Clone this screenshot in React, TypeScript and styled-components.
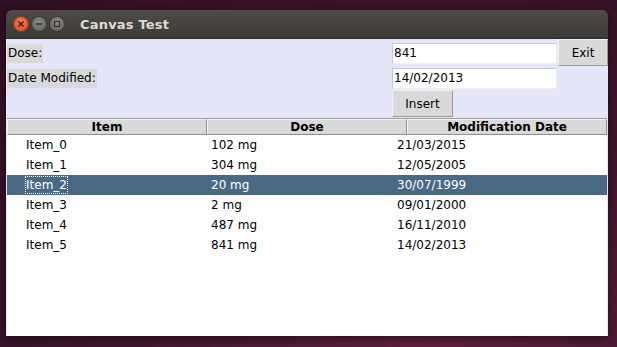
import React from "react";
import styled, { createGlobalStyle } from "styled-components";

const GlobalStyle = createGlobalStyle`
  html, body {
    margin: 0;
    padding: 0;
    width: 617px;
    height: 347px;
    overflow: hidden;
  }
  body {
    background: radial-gradient(ellipse at 70% 100%, #5e1f3c 0%, #44172f 45%, #2e0f22 100%);
    font-family: "DejaVu Sans", "Liberation Sans", sans-serif;
  }
`;

// Desktop + window
const Desktop = styled.div`
  padding: 10px 9px 0 6px;
`;

const Window = styled.div`
  width: 602px;
  height: 326px;
  display: flex;
  flex-direction: column;
  box-shadow: 0 2px 8px rgba(0, 0, 0, 0.55);
  border-radius: 6px 6px 0 0;
  overflow: hidden;
`;

const TitleBar = styled.div`
  height: 28px;
  flex: none;
  display: flex;
  align-items: center;
  padding-left: 8px;
  background: linear-gradient(#4d4c48, #3c3b37);
  border-bottom: 1px solid #2b2a27;
`;

const WinButtons = styled.div`
  display: flex;
  gap: 4px;
`;

const WinButton = styled.div<{ $close?: boolean }>`
  width: 14px;
  height: 14px;
  border-radius: 50%;
  display: flex;
  align-items: center;
  justify-content: center;
  background: ${(p) =>
    p.$close
      ? "radial-gradient(circle at 50% 35%, #f37c4f, #df4a16)"
      : "radial-gradient(circle at 50% 35%, #8a8984, #5f5e5a)"};
  box-shadow: 0 0 0 1px ${(p) => (p.$close ? "#9c3510" : "#3a3935")};
`;

const Title = styled.div`
  margin-left: 16px;
  color: #dfdbd2;
  font-weight: bold;
  font-size: 13px;
  letter-spacing: 0.2px;
`;

const Body = styled.div`
  flex: 1;
  display: flex;
  flex-direction: column;
  background: #e6e6fa;
  padding: 1px 0 0 1px;
`;

// Top form (grid like Tk)
const Form = styled.div`
  display: grid;
  grid-template-columns: 1fr 166px 50px;
  grid-template-rows: 27px 22px 29px;
  align-items: center;
`;

const Label = styled.div`
  justify-self: start;
  background: #d9d9d9;
  font-size: 12px;
  color: #000;
  padding: 1px 1px 2px 1px;
  line-height: 16px;
`;

const Entry = styled.div`
  box-sizing: border-box;
  height: 21px;
  width: 165px;
  background: #fff;
  border: 1px solid #c9c9cf;
  border-right-color: #f0f0f0;
  border-bottom-color: #f0f0f0;
  font-size: 12px;
  line-height: 19px;
  padding-left: 1px;
  color: #000;
`;

const Button = styled.div`
  box-sizing: border-box;
  height: 27px;
  background: #d9d9d9;
  border: 1px solid;
  border-color: #f2f2f2 #9a9a9a #9a9a9a #f2f2f2;
  font-size: 12px;
  display: flex;
  align-items: center;
  justify-content: center;
  color: #000;
`;

const ExitButton = styled(Button)`
  width: 50px;
  align-self: start;
  margin-top: -1px;
`;

const InsertButton = styled(Button)`
  width: 61px;
`;

// Table
const Table = styled.div`
  flex: 1;
  display: flex;
  flex-direction: column;
  background: #fff;
  border-top: 1px solid #9a9a9a;
  margin-right: 1px;
`;

const HeaderRow = styled.div`
  display: grid;
  grid-template-columns: 200px 200px 1fr;
  height: 16px;
  flex: none;
`;

const HeaderCell = styled.div`
  background: #d9d9d9;
  border: 1px solid;
  border-color: #f4f4f4 #8e8e8e #8e8e8e #f4f4f4;
  font-weight: bold;
  font-size: 12px;
  line-height: 14px;
  text-align: center;
  color: #000;
`;

const Row = styled.div<{ $selected?: boolean }>`
  display: grid;
  grid-template-columns: 200px 200px 1fr;
  height: 20px;
  align-items: center;
  font-size: 12px;
  background: ${(p) => (p.$selected ? "#4a6984" : "transparent")};
  color: ${(p) => (p.$selected ? "#ffffff" : "#000000")};
`;

const Cell = styled.div<{ $shift: number }>`
  margin-left: ${(p) => p.$shift}px;
  white-space: nowrap;
`;

const FocusText = styled.span<{ $focus?: boolean }>`
  outline: ${(p) => (p.$focus ? "1px dotted #ffffff" : "none")};
  outline-offset: 0px;
  padding: 1px 0;
`;

const rows = [
  ["Item_0", "102 mg", "21/03/2015"],
  ["Item_1", "304 mg", "12/05/2005"],
  ["Item_2", "20 mg", "30/07/1999"],
  ["Item_3", "2 mg", "09/01/2000"],
  ["Item_4", "487 mg", "16/11/2010"],
  ["Item_5", "841 mg", "14/02/2013"],
];

const App = () => {
  const selected = 2;
  return (
    <>
      <GlobalStyle />
      <Desktop>
        <Window>
          <TitleBar>
            <WinButtons>
              <WinButton $close>
                <svg width="8" height="8" viewBox="0 0 8 8">
                  <path d="M1.5 1.5 L6.5 6.5 M6.5 1.5 L1.5 6.5" stroke="#3b1406" strokeWidth="1.2" />
                </svg>
              </WinButton>
              <WinButton>
                <svg width="8" height="8" viewBox="0 0 8 8">
                  <path d="M1 4 H7" stroke="#2f2e2b" strokeWidth="1.4" />
                </svg>
              </WinButton>
              <WinButton>
                <svg width="8" height="8" viewBox="0 0 8 8">
                  <rect x="1.5" y="1.5" width="5" height="5" fill="none" stroke="#2f2e2b" strokeWidth="1.1" />
                </svg>
              </WinButton>
            </WinButtons>
            <Title>Canvas Test</Title>
          </TitleBar>
          <Body>
            <Form>
              <Label>Dose:</Label>
              <Entry>841</Entry>
              <ExitButton>Exit</ExitButton>
              <Label>Date Modified:</Label>
              <Entry>14/02/2013</Entry>
              <div />
              <div />
              <InsertButton>Insert</InsertButton>
              <div />
            </Form>
            <Table>
              <HeaderRow>
                <HeaderCell>Item</HeaderCell>
                <HeaderCell>Dose</HeaderCell>
                <HeaderCell>Modification Date</HeaderCell>
              </HeaderRow>
              {rows.map((r, i) => (
                <Row key={r[0]} $selected={i === selected}>
                  <Cell $shift={19}>
                    <FocusText $focus={i === selected}>{r[0]}</FocusText>
                  </Cell>
                  <Cell $shift={4}>{r[1]}</Cell>
                  <Cell $shift={-10}>{r[2]}</Cell>
                </Row>
              ))}
            </Table>
          </Body>
        </Window>
      </Desktop>
    </>
  );
};

export default App;
